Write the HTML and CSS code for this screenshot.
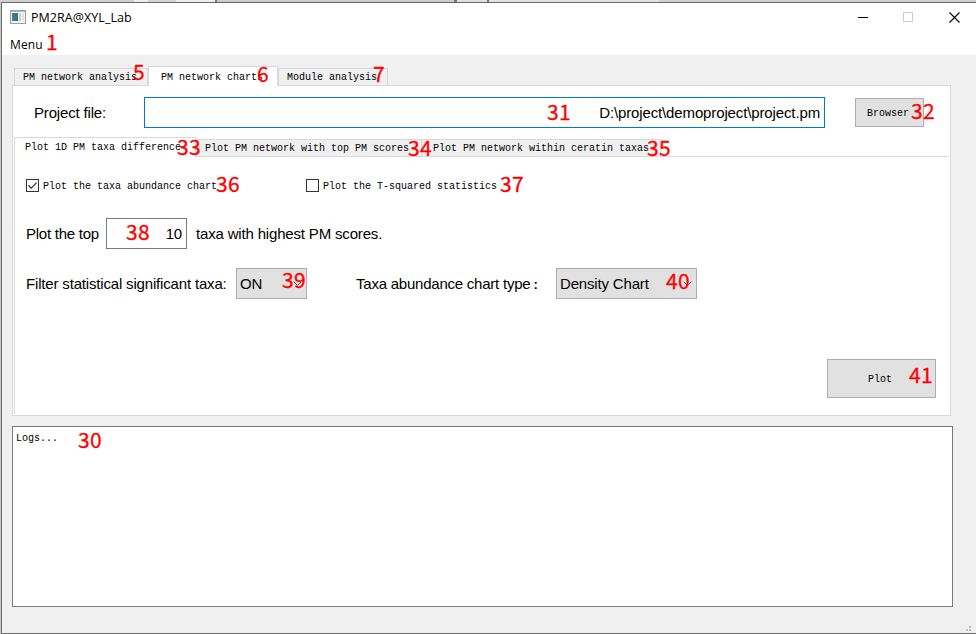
FILE: index.html
```html
<!DOCTYPE html>
<html lang="en">
<head>
<meta charset="utf-8">
<title>PM2RA@XYL_Lab</title>
<link rel="stylesheet" href="styles.css">
</head>
<body>
<div class="backdrop"></div>
<div class="window">
  <header class="titlebar">
    <svg class="app-icon" width="16" height="14" viewBox="0 0 16 14">
      <rect x="0.5" y="0.5" width="15" height="13" fill="#f4f4f4" stroke="#9a9da2"/>
      <path d="M1 1.5h14" stroke="#b5b8bd"/>
      <rect x="2" y="3" width="6" height="8" fill="#2f8069"/>
      <path d="M2 3h3v8H2z" fill="#4b779f"/>
      <rect x="9" y="3" width="2" height="8" fill="#c9d3e0"/>
      <rect x="12" y="3" width="2" height="8" fill="#e3e3e3"/>
    </svg>
    <span class="title">PM2RA@XYL_Lab</span>
    <svg class="controls" width="104" height="12" viewBox="0 0 104 12">
      <path d="M0 6.5h10" stroke="#000"/>
      <rect x="45.500" y="1.500" width="9" height="9" fill="none" stroke="#ccc"/>
      <path d="M91.500 1.500l10 10M101.500 1.500l-10 10" stroke="#000" stroke-width="1.100"/>
    </svg>
  </header>
  <nav class="menubar"><span class="menu">Menu</span><b class="mark m1">1</b></nav>
  <main class="content">
    <div class="tabs">
      <div class="tab t1">PM network analysis<b class="mark m5">5</b></div>
      <div class="tab t2 active">PM network charts<b class="mark m6">6</b></div>
      <div class="tab t3">Module analysis<b class="mark m7">7</b></div>
    </div>
    <section class="panel">
      <div class="project">
        <label class="project-label">Project file:</label>
        <div class="path">D:\project\demoproject\project.pm<b class="mark m31">31</b></div>
        <div class="button browse">Browser<b class="mark m32">32</b></div>
      </div>
      <div class="inner">
        <div class="subtabs">
          <div class="subtab s1 active">Plot 1D PM taxa difference<b class="mark m33">33</b></div>
          <div class="subtab s2">Plot PM network with top PM scores<b class="mark m34">34</b></div>
          <div class="subtab s3">Plot PM network within ceratin taxas<b class="mark m35">35</b></div>
          <div class="rest"></div>
        </div>
        <div class="row checks">
          <div class="check c1"><svg width="13" height="13" viewBox="0 0 13 13"><rect x=".5" y=".5" width="12" height="12" fill="#fff" stroke="#333"/><path d="M2.500 6.300l2.800 2.800 5.300-5.500" fill="none" stroke="#333" stroke-width="1.300"/></svg><span>Plot the taxa abundance chart</span><b class="mark m36">36</b></div>
          <div class="check"><svg width="13" height="13" viewBox="0 0 13 13"><rect x=".5" y=".5" width="12" height="12" fill="#fff" stroke="#333"/></svg><span>Plot the T-squared statistics</span><b class="mark m37">37</b></div>
        </div>
        <div class="row top">
          <span class="top-label">Plot the top</span>
          <div class="number">10<b class="mark m38">38</b></div>
          <span class="scores">taxa with highest PM scores.</span>
        </div>
        <div class="row filters">
          <span class="filter-label">Filter statistical significant taxa:</span>
          <div class="combo on"><span>ON</span><svg width="9" height="6" viewBox="0 0 9 6"><path d="M.7.7l3.800 3.800L8.300.7" fill="none" stroke="#555"/></svg><b class="mark m39">39</b></div>
          <span class="type-label">Taxa abundance chart type<span class="colon">:</span></span>
          <div class="combo density"><span>Density Chart</span><svg width="9" height="6" viewBox="0 0 9 6"><path d="M.7.7l3.800 3.800L8.300.7" fill="none" stroke="#555"/></svg><b class="mark m40">40</b></div>
        </div>
        <div class="button plot">Plot<b class="mark m41">41</b></div>
      </div>
    </section>
    <section class="logs">Logs...<b class="mark m30">30</b></section>
    <svg class="grip" width="5" height="5" viewBox="0 0 5 5"><path d="M3 0h2v2H3zM0 3h2v2H0zM3 3h2v2H3z" fill="#bfbfbf"/></svg>
  </main>
</div>
</body>
</html>
```
FILE: styles.css
```css
* { box-sizing: border-box; }
body {
  margin: 0;
  width: 976px;
  height: 634px;
  overflow: hidden;
  background: #c8c8c8;
  color: #000;
  font: 15px/18px "Liberation Sans", sans-serif;
  letter-spacing: -0.17px;
}
.backdrop {
  height: 2px;
  background: linear-gradient(90deg, #d0d0d0 0 134px, #eee 134px 148px, #d4d4d4 148px 176px, #eee 176px 215px, #777 215px 217px, #ccc 217px 454px, #777 454px 457px, #e0e0e0 457px 487px, #777 487px 489px, #e2e2e2 489px 659px, #cfcfcf 659px);
}
.window {
  display: flex;
  flex-direction: column;
  height: 632px;
  margin-left: 1px;
  border: 1px solid #6b6b6b;
  border-right: 0;
  background: #f0f0f0;
}
.titlebar {
  display: flex;
  align-items: center;
  flex: none;
  height: 29px;
  padding: 0 14px 1px 8px;
  background: #fff;
}
.title {
  margin-left: 5px;
  padding-top: 1px;
  font: 12.5px/16px "Open Sans", sans-serif;
  letter-spacing: 0.05px;
}
.controls { margin-left: auto; }
.menubar {
  position: relative;
  flex: none;
  height: 23px;
  padding: 5px 8px;
  background: #fff;
  font: 12px/16px "Open Sans", sans-serif;
  letter-spacing: 0.1px;
}
.mark {
  position: absolute;
  z-index: 2;
  margin-top: -2px;
  color: #f00;
  font: 400 21px/24px "Noto Sans CJK SC", sans-serif;
  letter-spacing: 0.3px;
  -webkit-text-stroke: 0.3px #f00;
}
.content { flex: 1; padding: 10px 0 0 10px; }
.tabs {
  display: flex;
  align-items: flex-end;
  height: 20px;
  padding-left: 2px;
  font: 10px/17px "Liberation Mono", monospace;
  letter-spacing: 0;
}
.tab {
  position: relative;
  height: 17px;
  border: 1px solid #d9d9d9;
  border-bottom: 0;
  background: #f0f0f0;
  white-space: pre;
}
.t1 { width: 134px; padding-left: 8px; }
.t2 { z-index: 1; width: 130px; height: 20px; margin-bottom: -1px; padding: 2px 0 0 12px; }
.t3 { width: 110px; padding-left: 8px; }
.t2.active { background: #fff; }
.panel {
  width: 939px;
  height: 331px;
  padding: 11px 1px 1px;
  border: 1px solid #d9d9d9;
  background: #fff;
}
.project { display: flex; height: 40px; padding-left: 20px; }
.project-label { width: 110px; padding-top: 7px; }
.path {
  position: relative;
  width: 681px;
  height: 31px;
  padding: 6px 4px;
  border: 1px solid #0078d7;
  text-align: right;
  letter-spacing: -0.13px;
}
.button {
  position: relative;
  border: 1px solid #adadad;
  background: #e1e1e1;
  font: 10px/16px "Liberation Mono", monospace;
  letter-spacing: 0;
}
.browse { width: 69px; height: 29px; margin: 1px 0 0 30px; padding: 7px 0 0 11px; }
.inner { height: 277px; border-left: 1px solid #d9d9d9; }
.subtabs {
  display: flex;
  align-items: flex-end;
  height: 20px;
  font: 10px/17px "Liberation Mono", monospace;
  letter-spacing: 0;
}
.subtab {
  position: relative;
  height: 18px;
  border: 1px solid #d9d9d9;
  border-left: 0;
  background: #f0f0f0;
  white-space: pre;
}
.s1 { width: 181px; height: 20px; padding: 1px 0 0 10px; border-bottom: 0; background: #fff; }
.s2 { width: 226px; padding-left: 9px; }
.s3 { width: 239px; padding-left: 11px; }
.rest { flex: 1; border-bottom: 1px solid #d9d9d9; height: 18px; }
.row { display: flex; padding-left: 11px; }
.checks { height: 13px; margin-top: 22px; }
.check {
  position: relative;
  display: flex;
  align-items: center;
  gap: 4px;
  font: 10px/13px "Liberation Mono", monospace;
  letter-spacing: 0;
}
.check span { padding-top: 1px; }
.c1 { width: 280px; }
.top { height: 31px; margin-top: 26px; align-items: center; }
.top-label { width: 80px; letter-spacing: -0.25px; }
.number {
  position: relative;
  width: 81px;
  height: 31px;
  padding: 6px 4px;
  border: 1px solid #7a7a7a;
  text-align: right;
}
.scores { margin-left: 9px; }
.filters { height: 31px; margin-top: 19px; align-items: center; }
.filter-label { width: 210px; }
.combo {
  position: relative;
  display: flex;
  align-items: center;
  justify-content: space-between;
  height: 31px;
  padding: 0 4px 0 3px;
  border: 1px solid #adadad;
  background: #e1e1e1;
}
.on { width: 71px; }
.type-label { width: 200px; margin-left: 49px; padding-top: 1px; letter-spacing: -0.23px; }
.colon { margin-left: 3px; font-weight: bold; font-size: 13px; }
.density { width: 141px; }
.plot { width: 109px; height: 39px; margin: 60px 0 0 812px; padding: 12px 0 0 40px; }
.logs {
  position: relative;
  width: 941px;
  height: 181px;
  margin-top: 10px;
  padding: 3px;
  border: 1px solid #7a7a7a;
  background: #fff;
  font: 10px/17px "Liberation Mono", monospace;
  letter-spacing: 0;
}
.grip { display: block; margin: 19px 0 0 954px; }
.m1 { left: 44px; top: -1px; }
.m5 { left: 118px; top: -8px; }
.m6 { left: 108px; top: -4px; }
.m7 { left: 94px; top: -6px; }
.m31 { left: 402px; top: 3px; }
.m32 { left: 55px; top: 1px; }
.m33 { left: 162px; top: -2px; }
.m34 { left: 212px; top: -3px; }
.m35 { left: 225px; top: -3px; }
.m36 { left: 190px; top: -6px; }
.m37 { left: 194px; top: -6px; }
.m38 { left: 19px; top: 2px; }
.m39 { left: 45px; top: 0; }
.m40 { left: 109px; top: 1px; }
.m41 { left: 81px; top: 4px; }
.m30 { left: 65px; top: 2px; }
```
